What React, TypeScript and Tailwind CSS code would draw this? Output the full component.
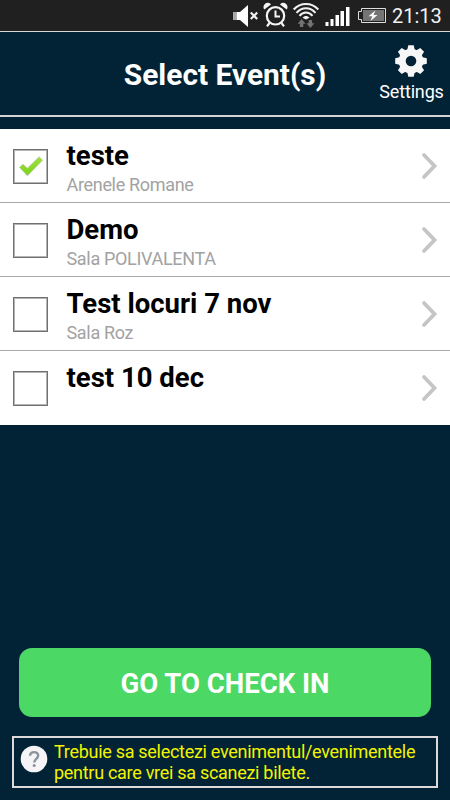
import React, { useState } from 'react';

interface EventItem {
  id: number;
  name: string;
  venue: string;
}

const events: EventItem[] = [
  { id: 1, name: 'teste', venue: 'Arenele Romane' },
  { id: 2, name: 'Demo', venue: 'Sala POLIVALENTA' },
  { id: 3, name: 'Test locuri 7 nov', venue: 'Sala Roz' },
  { id: 4, name: 'test 10 dec', venue: '' },
];

function StatusBar() {
  return (
    <div className="flex h-[31px] shrink-0 items-center bg-[#202020] pl-[232px]">
      <svg width="156" height="31" viewBox="232 0 156 31" fill="none" className="shrink-0">
        {/* Muted speaker */}
        <path d="M233 12h3.500v8H233z" fill="#a8a8a8" />
        <path d="M236.500 12h3.500L248 5v22l-8-7h-3.500z" fill="#fff" />
        <path d="M250.800 12.500l6.400 6.600M257.200 12.500l-6.400 6.600" stroke="#f0f0f0" strokeWidth="2.200" />
        {/* Alarm */}
        <circle cx="275.500" cy="15.800" r="8.700" stroke="#f5f5f5" strokeWidth="2.200" />
        <path d="M275.500 10.500v6h4.500" stroke="#f5f5f5" strokeWidth="2" />
        <path d="M264.300 9.500a4 4 0 0 1 6.700-5zM286.700 9.500a4 4 0 0 0-6.700-5z" fill="#f5f5f5" />
        <path d="M269.500 23l-2.500 3.300M281.500 23l2.500 3.300" stroke="#f5f5f5" strokeWidth="2.200" />
        {/* Wifi with traffic arrows */}
        <path
          d="M293.700 9.500c6.800-7.400 17.800-7.400 24.600 0M296.500 12.800c5.300-6.100 13.700-6.100 19 0M299.500 15.800c3.800-4.500 9.200-4.500 13 0"
          stroke="#f2f2f2"
          strokeWidth="2"
        />
        <path d="M302.500 17.800c2-2.400 5-2.400 7 0L306 19.500z" fill="#f2f2f2" />
        <path d="M301.600 19l4 4.700h-2.300V27h-3.400v-3.300h-2.300z" fill="#737373" />
        <path d="M310.400 28l4-4.700h-2.300V20h-3.400v3.300h-2.300z" fill="#737373" />
        {/* Signal */}
        <path d="M325.500 22h3v4h-3zM330.500 19h3v7h-3zM335.500 15h3.500v11h-3.500zM340.500 11h3.500v15h-3.500zM346 7h3.500v19H346z" fill="#fff" />
        {/* Charging battery */}
        <path d="M361.500 8.500h24v14h-24v-3h-3v-8h3z" stroke="#dedede" />
        <path d="M363 10h21v11h-21z" fill="#747474" />
        <path d="M375.500 10.500l-7 5.800h3.800l-1.800 4.700 7-6h-4z" fill="#fff" />
      </svg>
      <span className="ml-[4px] pt-[1px] text-[20px] leading-none text-[#f2f2f2]">21:13</span>
    </div>
  );
}

function GearIcon() {
  return (
    <svg width="34" height="34" viewBox="0 0 34 34" className="mr-[1px]">
      <g fill="#f7f7f7">
        <circle cx="17" cy="17" r="12.300" />
        <path
          id="teeth"
          d="M14.300 1.200h5.400l1.200 5.300h-7.800zM14.300 32.800h5.400l1.200-5.300h-7.800zM1.200 14.300v5.400l5.300 1.200v-7.800zM32.800 14.300v5.400l-5.300 1.200v-7.800z"
        />
        <use href="#teeth" transform="rotate(45 17 17)" />
      </g>
      <circle cx="17" cy="17" r="5.300" fill="#022336" />
    </svg>
  );
}

function CheckMark() {
  return (
    <svg width="24" height="22" viewBox="0 0 24 22">
      <defs>
        <linearGradient id="check" x1="0" y1="0" x2="0" y2="1">
          <stop offset="0" stopColor="#a4de3c" />
          <stop offset="1" stopColor="#79d51b" />
        </linearGradient>
      </defs>
      <path
        d="M.5 11.300l3.500-3 4.400 3.900L20.200.8l3.300 3.400L8.400 19.800z"
        fill="url(#check)"
        stroke="#b5c99a"
        strokeWidth=".8"
        strokeLinejoin="round"
      />
    </svg>
  );
}

function App() {
  const [selected, setSelected] = useState<number[]>([1]);

  const toggle = (id: number) => {
    setSelected((prev) => (prev.includes(id) ? prev.filter((x) => x !== id) : [...prev, id]));
  };

  return (
    <div className="flex h-[800px] w-[450px] flex-col overflow-hidden bg-[#022336] font-[Roboto,sans-serif]">
      <StatusBar />

      <header className="grid h-[86px] shrink-0 grid-cols-[76px_1fr_76px] border-t border-b-2 border-t-[#d8d8dc] border-b-[#d6d3d3]">
        <div />
        <h1 className="pt-[23px] text-center text-[29.900px] leading-[40px] font-bold whitespace-nowrap text-white">
          Select Event(s)
        </h1>
        <button className="flex flex-col items-center pt-[12px] pr-[1px] text-white">
          <GearIcon />
          <span className="mt-[3px] text-[18px] leading-[22px] tracking-[-0.150px]">Settings</span>
        </button>
      </header>

      <ul className="mt-[12px] shrink-0 bg-white">
        {events.map((event) => (
          <li
            key={event.id}
            onClick={() => toggle(event.id)}
            className="flex h-[74px] border-b border-[#a8a8a8] pl-[13px] last:border-white"
          >
            <div className="mt-[20px] flex size-[35px] shrink-0 items-center justify-center border border-[#707070] shadow-[inset_0_0_0_1px_#b4b4b4]">
              {selected.includes(event.id) && <CheckMark />}
            </div>
            <div className="ml-[18.500px] flex-1 pt-[10px]">
              <div className="text-[27.500px] leading-[34px] font-bold text-black">{event.name}</div>
              <div className="text-[18px] leading-[24px] tracking-[-0.320px] text-[#a2a2a2]">{event.venue}</div>
            </div>
            <svg width="18" height="30" viewBox="0 0 18 30" fill="none" className="mt-[22px] mr-[11px]">
              <path d="M3 4L13.500 15 3 26" stroke="#c5c5c7" strokeWidth="3.800" strokeLinecap="round" />
            </svg>
          </li>
        ))}
      </ul>

      <div className="mt-auto px-[19px]">
        <button className="h-[69px] w-full rounded-[13px] bg-[#4bd865] pt-[2px] text-[27.500px] font-bold text-white">
          GO TO CHECK IN
        </button>
      </div>

      <div className="mx-[12px] mt-[19px] mb-[12px] flex h-[52px] shrink-0 border-2 border-[#dedada] pt-[4px] pl-[6px]">
        <svg width="28" height="28" viewBox="0 0 28 28" className="mt-[3px] shrink-0">
          <circle cx="14" cy="14" r="13.300" fill="#f5f5f7" />
          <path d="M10 10.800c.2-4.900 8.200-4.800 8.200-.2 0 3.200-4 3.300-4 6.900" fill="none" stroke="#8d949b" strokeWidth="2.400" />
          <circle cx="14.200" cy="20.500" r="1.600" fill="#8d949b" />
        </svg>
        <p className="ml-[6px] text-[18px] leading-[20.500px] tracking-[-0.290px] whitespace-nowrap text-[#f3f300]">
          Trebuie sa selectezi evenimentul/evenimentele
          <br />
          pentru care vrei sa scanezi bilete.
        </p>
      </div>
    </div>
  );
}

export default App;
